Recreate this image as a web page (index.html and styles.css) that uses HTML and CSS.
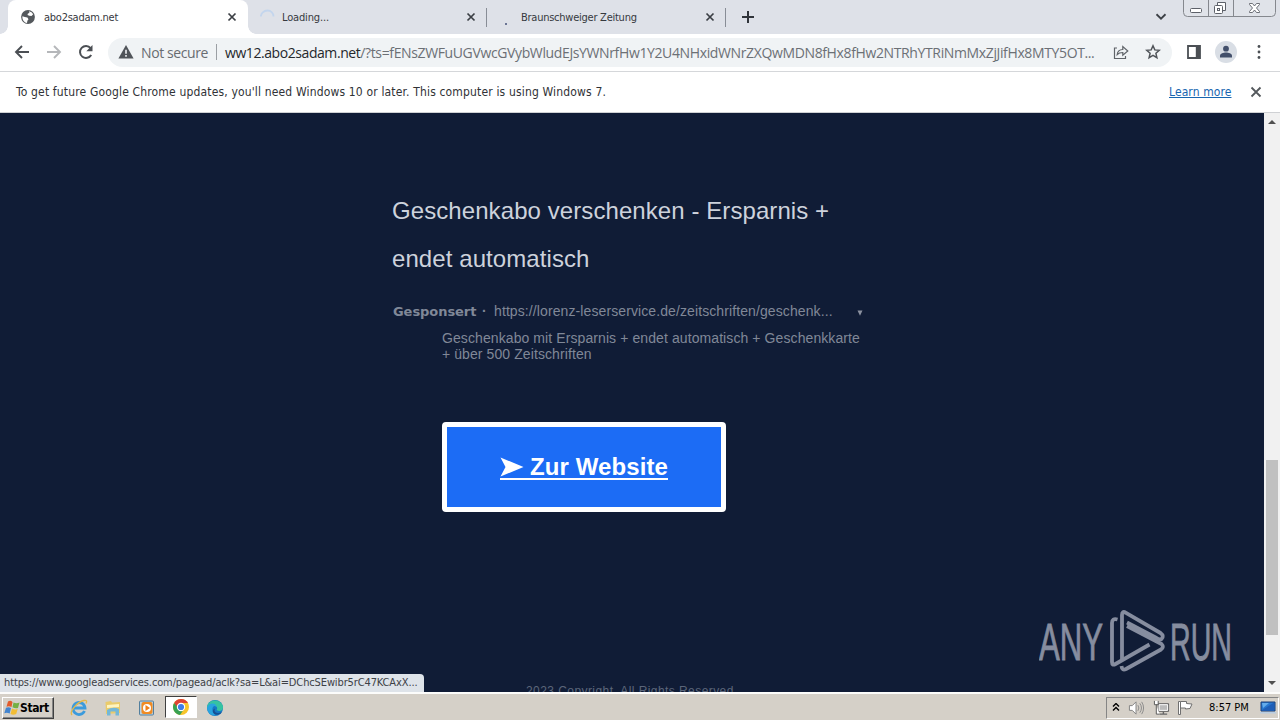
FILE: index.html
```html
<!DOCTYPE html>
<html lang="de">
<head>
<meta charset="utf-8">
<title>abo2sadam.net</title>
<link rel="stylesheet" href="styles.css">
</head>
<body>
<div class="screen">
  <header class="tabstrip">
    <div class="tab tab-active">
      <svg class="favicon" viewBox="0 0 16 16"><circle cx="8" cy="8" r="6.9" fill="#54585c"/><path d="M2.400 7.200 4.800 8l2.600.6 1.100 1.700-1.100 1.500-.4 2.200C4 13.400 2.100 10.800 2.400 7.200zM9 2.300l2.500.9 1.700 2-1.700 1.900-2.200-.3-1.800-.7.400-1.600 1.500-.6z" fill="#fff"/></svg>
      <span class="tab-title t1">abo2sadam.net</span>
      <svg class="tab-close" viewBox="0 0 10 10"><path d="M1.500 1.500l7 7m0-7l-7 7"/></svg>
    </div>
    <div class="tab">
      <svg class="favicon" viewBox="0 0 16 16"><path d="M.8 7.500C1 4.500 3.600 1.500 7.500 1.500c3.200 0 6 2.500 6 6" fill="none" stroke="#c3d5ed" stroke-width="1.800"/></svg>
      <span class="tab-title t2">Loading...</span>
      <svg class="tab-close" viewBox="0 0 10 10"><path d="M1.500 1.500l7 7m0-7l-7 7"/></svg>
    </div>
    <div class="tab">
      <svg class="favicon" viewBox="0 0 16 16"><rect x="6" y="14" width="2" height="2" fill="#6b7594"/></svg>
      <span class="tab-title t3">Braunschweiger Zeitung</span>
      <svg class="tab-close" viewBox="0 0 10 10"><path d="M1.500 1.500l7 7m0-7l-7 7"/></svg>
    </div>
    <svg class="newtab" viewBox="0 0 14 14"><path d="M7 1v12M1 7h12" stroke="#30343a" stroke-width="2"/></svg>
    <svg class="chevron" viewBox="0 0 10 8"><path d="M1 2l4 4 4-4" fill="none" stroke="#3c4046" stroke-width="1.600"/></svg>
    <svg class="winbuttons" viewBox="0 0 94 18"><path d="M.5 0v12.500q0 4 4 4h84q4 0 4-4V0M25.500 0v16.500M50.500 0v16.500" fill="#e0e3e9" stroke="#85888e"/><rect x="7.500" y="8.500" width="11" height="4" rx="1" fill="#fff" stroke="#5d6169"/><path d="M34.500 2.500h8v8h-8z" fill="#fff" stroke="#5d6169"/><rect x="31.500" y="5.500" width="8" height="8" rx="1" fill="#fff" stroke="#5d6169"/><rect x="34.500" y="8.500" width="2" height="2" fill="none" stroke="#5d6169"/><path d="M66.500 3.500h3l2 2.500 2-2.500h3v1l-3 3.500 3 3.500v1h-3l-2-2.500-2 2.500h-3v-1l3-3.500-3-3.500z" fill="#fff" stroke="#5d6169" stroke-width=".9"/></svg>
  </header>

  <div class="toolbar">
    <svg class="nav" viewBox="0 0 16 16"><path d="M15 8H2m6-6L2 8l6 6" fill="none" stroke="#4b4f54" stroke-width="1.900"/></svg>
    <svg class="nav" viewBox="0 0 16 16"><path d="M1 8h13M8 2l6 6-6 6" fill="none" stroke="#b5b7ba" stroke-width="1.900"/></svg>
    <svg class="nav" viewBox="0 0 16 16"><path d="M13.200 11A6 6 0 1 1 12.600 4.100" fill="none" stroke="#4b4f54" stroke-width="2"/><path d="M14.500 1v6.200H8.300z" fill="#4b4f54"/></svg>
    <div class="omnibox">
      <svg class="warn" viewBox="0 0 16 14"><path d="M8 0l7.600 13.500H.4z" fill="#505459"/><path d="M8 4.800v4M8 10v1.800" stroke="#f0f2f4" stroke-width="1.600"/></svg>
      <span class="insecure">Not secure</span>
      <span class="divider"></span>
      <span class="url"><span class="host">ww12.abo2sadam.net</span><span class="path">/?ts=fENsZWFuUGVwcGVybWludEJsYWNrfHw1Y2U4NHxidWNrZXQwMDN8fHx8fHw2NTRhYTRiNmMxZjJifHx8MTY5OT...</span></span>
      <svg class="share" viewBox="0 0 16 16"><path d="M4 4H1.500v10.500h11V12M4.200 10.500C4.500 7.300 6.600 5.600 9.800 5.500V2.500L14.800 7l-5 4.300V8.500c-2.300 0-4.200.5-5.600 2z" fill="none" stroke="#5f6368" stroke-width="1.200"/></svg>
      <svg class="star" viewBox="0 0 16 16"><path d="M8 1.800l1.800 4.100 4.500.4-3.400 3 1 4.400L8 11.400l-3.900 2.300 1-4.400-3.400-3 4.500-.4z" fill="none" stroke="#505459" stroke-width="1.500"/></svg>
    </div>
    <svg class="panel" viewBox="0 0 14 14"><path d="M1 1h12v12H1z" fill="none" stroke="#4b4f54" stroke-width="1.800"/><path d="M8.800 1H13v12H8.800z" fill="#4b4f54"/></svg>
    <svg class="avatar" viewBox="0 0 22 22"><circle cx="11" cy="11" r="11" fill="#d9dee5"/><circle cx="11" cy="7.700" r="2.900" fill="#43506b"/><path d="M5 16.500v-1.800c0-2 3.500-3.200 6-3.200s6 1.200 6 3.200v1.800z" fill="#43506b"/></svg>
    <svg class="dots" viewBox="0 0 4 16"><g fill="#4b4f54"><circle cx="2" cy="2.500" r="1.400"/><circle cx="2" cy="8" r="1.400"/><circle cx="2" cy="13.500" r="1.400"/></g></svg>
  </div>

  <div class="infobar">
    <span class="notice">To get future Google Chrome updates, you'll need Windows 10 or later. This computer is using Windows 7.</span>
    <span class="learn">Learn more</span>
    <svg class="info-close" viewBox="0 0 12 12"><path d="M1.500 1.500l9 9m0-9l-9 9" stroke="#54585c" stroke-width="1.800"/></svg>
  </div>

  <div class="viewport">
    <main class="page">
      <h1 class="headline"><span>Geschenkabo verschenken - Ersparnis +</span><br><span class="h-second">endet automatisch</span></h1>
      <div class="source"><b class="sponsored">Gesponsert</b><b class="middot">·</b><span class="site">https://lorenz-leserservice.de/zeitschriften/geschenk...</span><svg class="caret" viewBox="0 0 6 6"><path d="M.5.500h5L3 5.800z" fill="#8b91a0"/></svg></div>
      <p class="desc"><span>Geschenkabo mit Ersparnis + endet automatisch + Geschenkkarte</span><br><span>+ über 500 Zeitschriften</span></p>
      <div class="cta"><span class="cta-label"><svg class="arrow" viewBox="0 0 24 20"><path d="M.5.500L23.500 10 .5 19.500 5.500 10z" fill="#fff"/></svg><span class="cta-text">Zur Website</span></span></div>
      <div class="copyright">2023 Copyright. All Rights Reserved.</div>
    </main>
    <div class="scrollbar">
      <svg class="sb-arrow" viewBox="0 0 8 4"><path d="M0 4l4-4 4 4z" fill="#505050"/></svg>
      <div class="thumb"></div>
      <svg class="sb-arrow" viewBox="0 0 8 4"><path d="M0 0l4 4 4-4z" fill="#505050"/></svg>
    </div>
    <svg class="watermark" viewBox="0 0 194 64">
      <g class="wm-text"><text x="0" y="51" textLength="64" lengthAdjust="spacingAndGlyphs">ANY</text><text x="131" y="51" textLength="62" lengthAdjust="spacingAndGlyphs">RUN</text></g>
      <g fill="none" stroke="#868d9f" stroke-width="3.800" stroke-linejoin="round"><path d="M78.500 10.500Q73 9 73 14v39q0 4 3.500 2L110.500 35.500"/><path d="M83 50V6q0-4.500 4-2.200L121.500 24q4 3 1 6-2 1-5-1L88 13.500"/><path d="M88 17L122.500 35q3 3-.5 5.500L87 60q-4 2-4.500-3"/></g>
    </svg>
    <div class="status">https://www.googleadservices.com/pagead/aclk?sa=L&amp;ai=DChcSEwibr5rC47KCAxX...</div>
  </div>

  <footer class="taskbar">
    <div class="start"><svg class="flag" viewBox="0 0 16 16"><path d="M4 1.500Q6.500 0 8.500 2L7.500 7Q5 5.500 2.500 6.700z" fill="#e25b2b"/><path d="M9.500 2.500q3 1.500 6 0L14 8Q11.500 9 8.500 7.300z" fill="#75b043"/><path d="M2 7.800Q4.700 6.500 7 8.100L5.700 13.500Q3 12 .3 13.200z" fill="#4284cf"/><path d="M8 8.500q3 1.500 5.700.5l-1.500 5q-3 1.500-5.700 0z" fill="#f2bd35"/></svg><span class="start-text">Start</span></div>
    <svg class="app ie" viewBox="0 0 18 18"><path d="M14.500 12A6 6 0 1 1 15 9H4.500" fill="none" stroke="#3c9bdc" stroke-width="2.800"/><path d="M2 16C-1 13 7 3 14 1.500c3-.5 3 1 2 3" fill="none" stroke="#e4b84a" stroke-width="1.300"/></svg>
    <svg class="app" viewBox="0 0 18 18"><path d="M1.500 3L7 2l1 1.500 8-.5v11l-14 1z" fill="#eacb6b"/><path d="M3 6l12-1v3L3 9z" fill="#fff4bf"/><path d="M3 16.500V11q6-4 12-1v6.500h-3.500v-4h-5v4z" fill="#73b7d8"/></svg>
    <svg class="app" viewBox="0 0 18 18"><rect x="1.500" y="2" width="14" height="14" rx="1" fill="#b9d1e0" stroke="#527f9e"/><rect x="3.500" y="3" width="11" height="12" rx="2" fill="#f08b23"/><circle cx="9" cy="9" r="4" fill="#fff"/><path d="M7.500 6v6l4.500-3z" fill="#ed7f18"/></svg>
    <div class="active-app"><svg class="chrome" viewBox="0 0 18 18"><circle cx="9" cy="9" r="8" fill="#f8c52b"/><path d="M2.100 5A8 8 0 0 1 16 5H9L5 10z" fill="#df4335"/><path d="M2.100 5A8 8 0 0 0 8 17l4-6H7z" fill="#38a152"/><circle cx="9" cy="9" r="4.200" fill="#fff"/><circle cx="9" cy="9" r="3.100" fill="#3f7de8"/></svg></div>
    <svg class="app edge" viewBox="0 0 18 18"><circle cx="9" cy="9" r="8" fill="#1478c5"/><path d="M1 9C1-.5 15-1 17 7.500c.5 4-3 5.500-6.500 3.500 2-3-1-5-4-4.500Q2.500 7 1 9z" fill="#36c3a1"/><path d="M1 9c2-7 10-5 9.500-.8Q8 5.500 6.500 9q-.8 4 3.500 7.500Q2 17 1 9z" fill="#29a4df"/><path d="M9 9.500c-2 4 3 6 7 3.500-2 3-7 4-9 .5q-1-3 2-4z" fill="#184f91"/></svg>
    <div class="tray">
      <svg class="ic-up" viewBox="0 0 8 10"><path d="M1 3.500l3-3 3 3M1 7.500l3-3 3 3" fill="none" stroke="#000" stroke-width="1.400"/></svg>
      <svg class="ic-sound" viewBox="0 0 18 16"><path d="M1.500 5.500h3l4-4v13l-4-4h-3z" fill="#fff" stroke="#808080"/><path d="M10.500 5q2 3 0 6M12.500 3q3.500 5 0 10M14.500 1.500q4 6.500 0 13" fill="none" stroke="#898989"/></svg>
      <svg class="ic-net" viewBox="0 0 18 16"><path d="M5.500 3.500h11v8h-11z" fill="#bbb" stroke="#555"/><path d="M6.500 4.500h9v6h-9z" fill="none" stroke="#fff"/><path d="M7 14.500h8M11 12v2" stroke="#666" stroke-width="1.500"/><path d="M1.500.500v4h4v-4M3.500 4.500v10H7" fill="#fff" stroke="#555"/></svg>
      <svg class="ic-flag" viewBox="0 0 17 16"><path d="M1.500 1.500h2v13h-2z" fill="#fff" stroke="#707070"/><path d="M3.500 1.500h6v2l5.500.5-2 4.500-4.500.5v-1h-5z" fill="#fff" stroke="#707070"/></svg>
      <span class="clock">8:57 PM</span>
      <svg class="ic-desk" viewBox="0 0 16 13"><path d="M1 1h14v9H1z" fill="#2877cf" stroke="#193e78"/><path d="M1.500 9.500L14 1.500v8z" fill="#1f5eb7"/><path d="M2 2h7L3 7z" fill="#64aceb"/><path d="M0 11h16v1.500H0z" fill="#b9cde1"/></svg>
    </div>
  </footer>
</div>
</body>
</html>
```
FILE: styles.css
```css
* { box-sizing: border-box; }
body { margin: 0; font-family: "DejaVu Sans Condensed", "DejaVu Sans", sans-serif; font-stretch: condensed; }
svg { display: block; flex: none; }
.screen { width: 1280px; height: 720px; display: flex; flex-direction: column; overflow: hidden; background: #fff; white-space: nowrap; }

.tabstrip { height: 34px; flex: none; background: #dee1e8; display: flex; padding-left: 8px; position: relative; }
.tab { width: 239px; height: 34px; display: flex; align-items: center; padding: 0 11px 0 12px; position: relative; }
.tab:not(.tab-active)::after { content: ""; position: absolute; right: 0; top: 8px; width: 1px; height: 19px; background: #888d96; }
.tab-active { width: 240px; background: #fff; border-radius: 8px 8px 0 0; }
.tab-active::before, .tab-active::after { content: ""; position: absolute; bottom: 0; width: 8px; height: 8px; }
.tab-active::before { left: -8px; background: radial-gradient(circle at 0 0, transparent 7.5px, #fff 8px); }
.tab-active::after { right: -8px; background: radial-gradient(circle at 100% 0, transparent 7.5px, #fff 8px); }
.favicon { width: 16px; height: 16px; margin-right: 7px; }
.tab-title { flex: 1; padding-top: 1px; font-size: 11px; line-height: 16px; color: #36393e; }
.t1 { padding-left: 1px; letter-spacing: -.25px; }
.t2 { letter-spacing: -.15px; margin-left: -1px; }
.t3 { letter-spacing: -.25px; margin-left: -1px; }
.tab-close { width: 10px; height: 10px; stroke: #3b3f44; stroke-width: 1.7; }
.newtab { width: 14px; height: 14px; margin: 10px 0 0 15px; }
.chevron { width: 12px; height: 9px; margin: 12px 16px 0 auto; }
.winbuttons { width: 94px; height: 18px; margin-right: 3px; }

.toolbar { height: 38px; flex: none; display: flex; align-items: center; padding: 0 19px 1px 14px; border-bottom: 1px solid #d5d7da; }
.nav { width: 16px; height: 16px; margin-right: 16px; }
.omnibox { width: 1064px; height: 29px; margin-left: -2px; border-radius: 15px; background: #f0f3f5; display: flex; align-items: center; padding-left: 10px; }
.warn { width: 16px; height: 14px; }
.insecure { width: 75px; flex: none; margin-left: 7px; font: 14px "Open Sans", sans-serif; letter-spacing: -.4px; color: #686c71; }
.divider { width: 1px; height: 16px; flex: none; background: #9b9fa4; }
.url { width: 896px; flex: none; padding-left: 8px; font: 14px "Open Sans", sans-serif; color: #6c7075; }
.host { color: #25282c; letter-spacing: -.43px; }
.path { letter-spacing: -.37px; }
.share, .star { width: 16px; height: 16px; }
.star { margin-left: 16px; }
.panel { width: 14px; height: 14px; margin-left: 15px; }
.avatar { width: 22px; height: 22px; margin-left: 14px; }
.dots { width: 4px; height: 16px; margin-left: 20px; }

.infobar { height: 41px; flex: none; display: flex; align-items: center; padding: 0 18px 1px 16px; border-bottom: 1px solid #cfd1d4; font-size: 12px; color: #303236; }
.notice { flex: 1; letter-spacing: .16px; }
.learn { width: 63px; color: #1765b0; text-decoration: underline; letter-spacing: .1px; margin-right: 18px; }
.info-close { width: 12px; height: 12px; }

.viewport { height: 579px; flex: none; display: flex; position: relative; overflow: hidden; }
.page { width: 1264px; height: 579px; background: #101c36; padding: 74px 0 0 392px; font-family: "Liberation Sans", Arial, sans-serif; color: #808898; overflow: hidden; }
.headline { margin: 0; font-size: 24px; line-height: 48px; font-weight: 400; color: #cdd2dc; letter-spacing: .08px; }
.source { display: flex; align-items: center; height: 20px; margin-top: 18px; padding-left: 1px; font-size: 14px; }
.sponsored { width: 89px; font: bold 13px "DejaVu Sans", sans-serif; letter-spacing: -.05px; }
.middot { width: 12px; }
.site { width: 363px; letter-spacing: .1px; }
.caret { width: 6px; height: 6px; margin-top: 4px; }
.desc { margin: 9px 0 0 50px; font-size: 14px; line-height: 16px; letter-spacing: .09px; }
.cta { width: 284px; height: 90px; margin: 60px 0 0 50px; border: 5px solid #fff; border-radius: 4px; background: #1c6cf5; display: flex; justify-content: center; align-items: center; }
.cta-label { display: flex; align-items: center; height: 26px; padding-top: 2px; border-bottom: 2px solid #fff; color: #fff; font-size: 24px; font-weight: 700; }
.arrow { width: 24px; height: 20px; margin-right: 6px; }
.cta-text { letter-spacing: .1px; }
.copyright { margin: 171px 0 0 134px; font-size: 12px; line-height: 16px; letter-spacing: .43px; color: #5c667a; }
.scrollbar { width: 16px; height: 579px; background: #f1f1f1; display: flex; flex-direction: column; align-items: center; padding: 7px 0; }
.sb-arrow { width: 8px; height: 4px; }
.thumb { width: 12px; height: 175px; margin: 336px 0 46px; background: #c0c0c0; }
.watermark { position: absolute; left: 1039px; top: 496px; width: 194px; height: 64px; }
.wm-text { font: 52px "Liberation Sans Narrow", "Liberation Sans", sans-serif; fill: #868d9f; stroke: #868d9f; stroke-width: .9px; }
.status { position: absolute; left: 0; bottom: 0; width: 424px; height: 18px; padding-left: 4px; background: #dee3e9; border-radius: 0 4px 0 0; font-size: 11px; line-height: 18px; letter-spacing: -.125px; color: #3d4146; }

.taskbar { height: 28px; flex: none; background: #d5d0c8; border-top: 2px solid #fcfcfb; display: flex; align-items: center; padding: 1px 1px 0 2px; }
.start { width: 52px; height: 22px; display: flex; align-items: center; padding-left: 1px; border: 1px solid; border-color: #fff #404040 #404040 #fff; box-shadow: inset -1px -1px #858585; }
.flag { width: 16px; height: 16px; }
.start-text { font-size: 12px; font-weight: 700; color: #000; letter-spacing: -.4px; }
.app { width: 18px; height: 18px; margin-right: 16px; }
.ie { margin-left: 16px; }
.active-app { width: 32px; height: 22px; margin: 0 0 1px -7px; display: flex; justify-content: center; align-items: center; background: #fff; border: 1px solid; border-color: #404040 #fff #fff #404040; }
.chrome { width: 18px; height: 18px; }
.edge { margin-left: 9px; }
.tray { width: 173px; height: 22px; margin-left: auto; display: flex; align-items: center; border: 1px solid; border-color: #858585 #fff #fff #858585; padding-left: 5px; }
.ic-up { width: 8px; height: 10px; }
.ic-sound { width: 17px; height: 16px; margin-left: 8px; }
.ic-net { width: 17px; height: 16px; margin-left: 8px; }
.ic-flag { width: 17px; height: 16px; margin-left: 7px; }
.clock { width: 51px; margin-left: 15px; font-size: 11px; color: #000; }
.ic-desk { width: 16px; height: 13px; }
```
